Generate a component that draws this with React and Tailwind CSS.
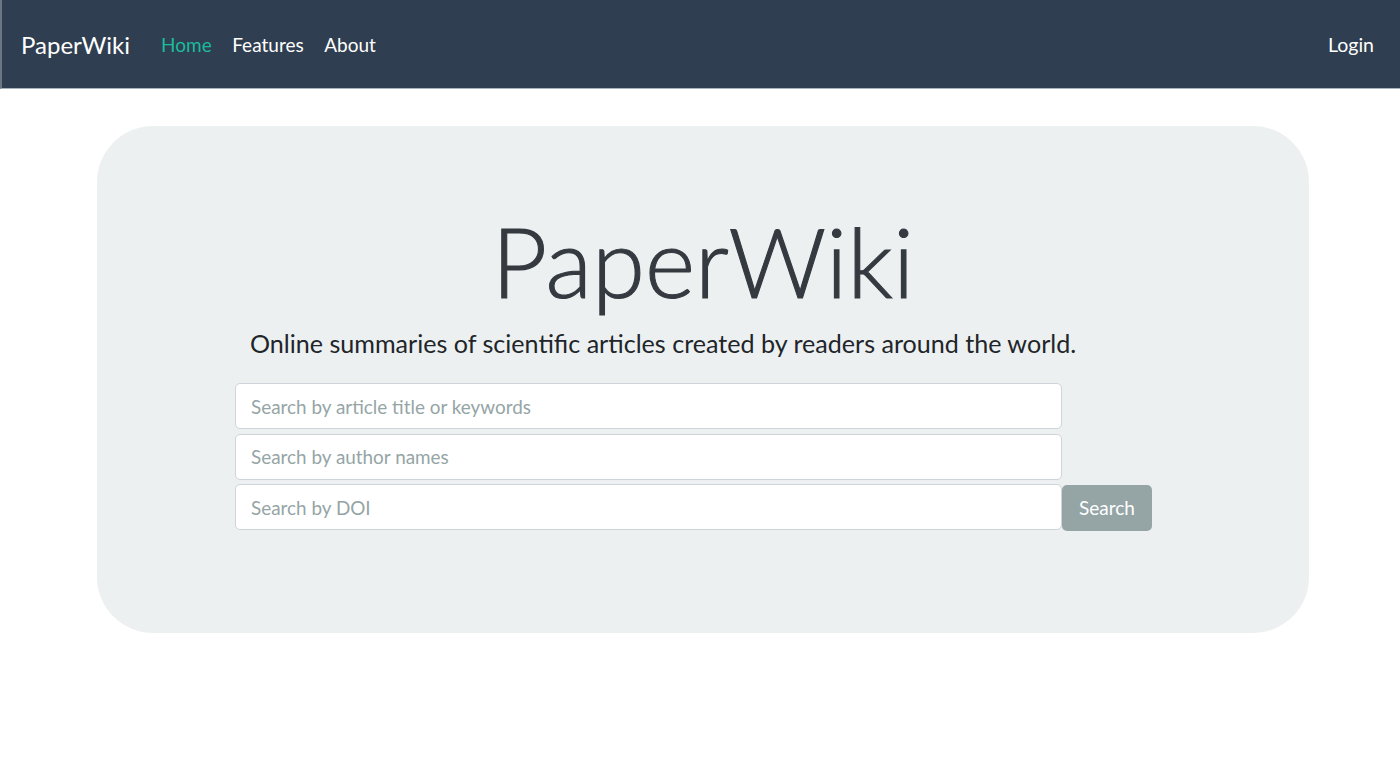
import React, { useState } from 'react';

const fields = [
    'Search by article title or keywords',
    'Search by author names',
    'Search by DOI',
];

const Navbar = () => (
    <nav className="h-[89px] bg-[#2f3e50] border-l-2 border-l-[#6b7785] border-b border-b-[#a9b3bc] flex items-center pl-[19px] pr-[26px] pt-[2px]">
        <a href="#" className="text-white text-[24px] mr-[31px]">PaperWiki</a>
        <div className="flex items-center gap-[20.5px] text-[19px]">
            <a href="#" className="text-[#1abc9c]">Home</a>
            <a href="#" className="text-white">Features</a>
            <a href="#" className="text-white">About</a>
        </div>
        <a href="#" className="ml-auto text-white text-[19.5px]">Login</a>
    </nav>
);

const App = () => {
    const [values, setValues] = useState(['', '', '']);

    return (
        <div className="min-h-[761px] bg-white font-['Lato','Liberation_Sans',sans-serif]">
            <Navbar />
            <div className="pt-[37px] pl-[97px]">
                <div className="w-[1212px] h-[507px] bg-[#ecf0f1] rounded-[56px] pt-[77px]">
                    <h1 className="text-center text-[96px] leading-[1.2] font-light text-[#343a40] [-webkit-text-stroke:1.1px_#343a40]">PaperWiki</h1>
                    <p className="pl-[153px] mt-[10px] text-[25.1px] leading-[1.2] text-[#212529]">
                        Online summaries of scientific articles created by readers around the world.
                    </p>
                    <form className="pl-[138px] mt-[25px] flex flex-col gap-[4.5px]" onSubmit={(e) => e.preventDefault()}>
                        {fields.map((f, i) => (
                            <div key={f} className="flex items-end">
                                <input
                                    type="text"
                                    placeholder={f}
                                    value={values[i]}
                                    onChange={(e) => setValues(values.map((v, j) => (j === i ? e.target.value : v)))}
                                    className="w-[827px] h-[46px] bg-white border border-[#ced4da] rounded-[5px] px-[15px] text-[18.9px] text-[#2c3e50] placeholder:text-[#95a5a6] outline-none"
                                />
                                {i === 2 && (
                                    <button className="w-[90px] h-[46px] -mb-[1px] bg-[#95a5a6] text-white text-[19px] rounded-[5px]">
                                        Search
                                    </button>
                                )}
                            </div>
                        ))}
                    </form>
                </div>
            </div>
        </div>
    );
};

export default App;
